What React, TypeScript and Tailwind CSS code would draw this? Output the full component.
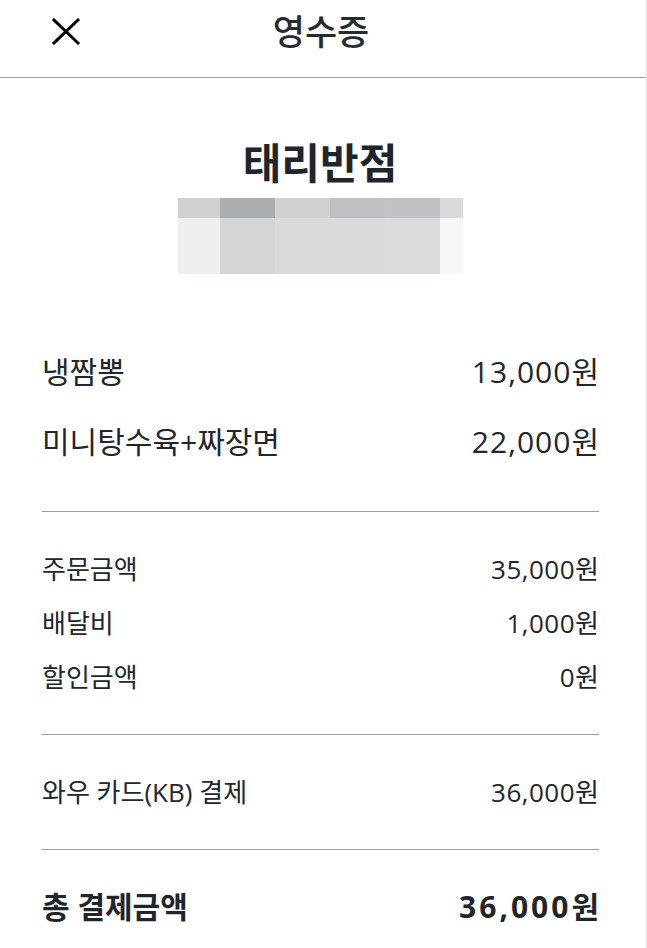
const font = { fontFamily: '"Open Sans", "Noto Sans CJK KR", "Noto Sans", sans-serif' };

const items = [
  { name: "냉짬뽕", price: "13,000원" },
  { name: "미니탕수육+짜장면", price: "22,000원" },
];

const summary = [
  { name: "주문금액", price: "35,000원" },
  { name: "배달비", price: "1,000원" },
  { name: "할인금액", price: "0원" },
];

const blurTop = ["bg-[#cfd0d2]", "bg-[#abaeb1]", "bg-[#d0d1d3]", "bg-[#bfc0c3]", "bg-[#c1c2c5]", "bg-[#dadadc]"];
const blurBottom = ["bg-[#eeefef]", "bg-[#d4d5d7]", "bg-[#d9dadc]", "bg-[#d9dadc]", "bg-[#dadbdd]", "bg-[#f7f7f7]"];
const blurWidths = ["w-[42px]", "w-[55px]", "w-[55px]", "w-[55px]", "w-[55px]", "w-[23px]"];

export default function App() {
  return (
    <div
      className="w-[647px] h-[948px] bg-white text-[#20262e] overflow-hidden border-r border-[#e8e8e8]"
      style={font}
    >
      <header className="relative h-[78px] flex items-center justify-center border-b border-[#9d9d9d]">
        <button className="absolute left-[52px] top-[18px] w-[28px] h-[27px]">
          <svg viewBox="0 0 28 27" className="w-[28px] h-[27px]">
            <path d="M2 2 L26 25 M26 2 L2 25" stroke="#000" strokeWidth="3" strokeLinecap="square" />
          </svg>
        </button>
        <h1 className="text-[35px] font-medium text-[#262b33] leading-none -mt-[14px] -ml-[4px]">영수증</h1>
      </header>

      <div className="flex flex-col items-center pr-[6px]">
        <h2 className="mt-[61px] text-[42px] font-bold leading-[48px] text-[#1f252d]">태리반점</h2>
        <div className="mt-[11px] flex">
          {blurWidths.map((w, i) => (
            <div key={i} className={`flex flex-col ${w}`}>
              <div className={`h-[20px] ${blurTop[i]}`} />
              <div className={`h-[56px] ${blurBottom[i]}`} />
            </div>
          ))}
        </div>
      </div>

      <div className="pl-[42px] pr-[47px] mt-[63px]">
        {items.map((it) => (
          <div key={it.name} className="h-[70px] flex items-center justify-between text-[30px] leading-[40px]">
            <span>{it.name}</span>
            <span className="tracking-[1px] -mr-[1px]">{it.price}</span>
          </div>
        ))}

        <div className="mt-[34px] border-t border-[#9d9d9d]" />

        <div className="py-[30px]">
          {summary.map((it) => (
            <div key={it.name} className="h-[54px] flex items-center justify-between text-[26px] leading-[36px]">
              <span>{it.name}</span>
              <span className="tracking-[0.5px] -mr-[0.5px]">{it.price}</span>
            </div>
          ))}
        </div>

        <div className="border-t border-[#9d9d9d]" />

        <div className="py-[30px]">
          <div className="h-[54px] flex items-center justify-between text-[26px] leading-[36px]">
            <span>와우 카드(KB) 결제</span>
            <span className="tracking-[0.5px] -mr-[0.5px]">36,000원</span>
          </div>
        </div>

        <div className="border-t border-[#9d9d9d]" />

        <div className="pt-[30px]">
          <div className="h-[54px] flex items-center justify-between text-[30px] leading-[40px] font-bold text-[#1f252d]">
            <span>총 결제금액</span>
            <span className="tracking-[3px] -mr-[3px]">36,000원</span>
          </div>
        </div>
      </div>
    </div>
  );
}
